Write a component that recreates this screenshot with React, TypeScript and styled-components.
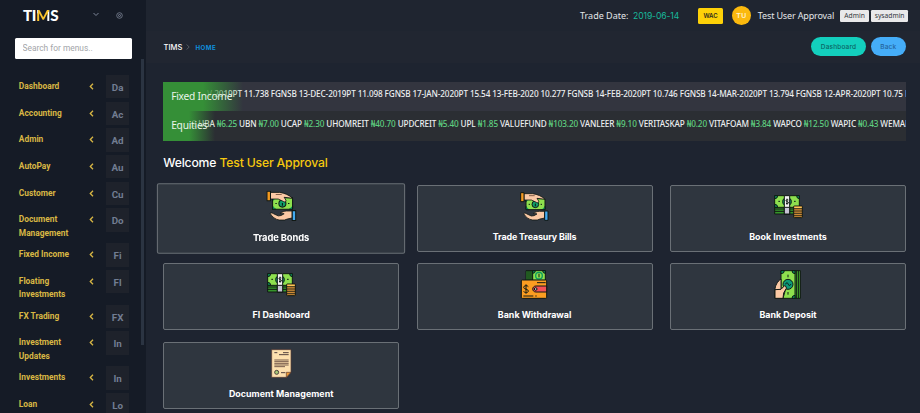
import React from "react";
import styled, { createGlobalStyle, css } from "styled-components";

const GlobalStyle = createGlobalStyle`
  * { box-sizing: border-box; }
  body { margin: 0; background: #1e2430; overflow: hidden; }
`;

const Page = styled.div`
  display: flex;
  width: 920px;
  height: 413px;
  overflow: hidden;
  background: #1e2430;
  color: #fff;
  font-family: "Noto Sans", sans-serif;
  white-space: nowrap;
`;

/* ---------- Sidebar ---------- */
const Sidebar = styled.aside`
  flex: none;
  width: 146px;
  height: 413px;
  background: #151b26;
  display: flex;
  flex-direction: column;
`;
const Brand = styled.div`
  height: 38px;
  flex: none;
  display: flex;
  align-items: flex-start;
  padding: 6px 0 0 23px;
`;
const Logo = styled.div`
  width: 35px;
  font: 900 15.2px/18px Lato, sans-serif;
  letter-spacing: -0.35px;
`;
const LogoM = styled.span`
  background: linear-gradient(105deg, #fff 0 18%, #fbc52d 19% 74%, #fff 75%);
  background-clip: text;
  -webkit-background-clip: text;
  color: transparent;
`;
const BrandIcon = styled.svg<{ $left: number; $top: number }>`
  margin: ${(p) => p.$top}px 0 0 ${(p) => p.$left}px;
  fill: none;
  stroke: #7c8596;
`;
const Search = styled.input`
  flex: none;
  width: 116.5px;
  height: 20.5px;
  margin-left: 15px;
  padding: 0 7.5px;
  border: 0;
  border-radius: 1.5px;
  background: #fff;
  font: 8.4px Roboto, sans-serif;
  outline: 0;
  &::placeholder { color: #a3a5a9; opacity: 1; }
`;
const MenuArea = styled.div`
  flex: 1;
  display: flex;
  justify-content: space-between;
  min-height: 0;
`;
const Menu = styled.nav`
  padding: 16.6px 0 0 18.8px;
`;
const MenuRow = styled.div<{ $tall: boolean }>`
  display: flex;
  height: ${(p) => (p.$tall ? 35 : 26.62)}px;
`;
const MenuLabel = styled.span`
  width: 67px;
  padding-top: 5.1px;
  white-space: pre-line;
  color: #d8b744;
  font: 700 8.4px/13.6px Roboto, sans-serif;
`;
const Caret = styled.svg`
  width: 5px;
  height: 7px;
  margin: 8.1px 12.3px 0 2.8px;
  fill: none;
  stroke: #d8b744;
  stroke-width: 1.3;
`;
const Tile = styled.span`
  width: 23.4px;
  height: 23.4px;
  background: #1e222b;
  color: #727d92;
  font: 700 9.8px/25px Roboto, sans-serif;
  text-align: center;
`;
const Scrollbar = styled.div`
  width: 3.6px;
  height: 286px;
  margin: 0.5px 1.6px 0 0;
  background: #2b3442;
`;

/* ---------- Main ---------- */
const Main = styled.main`
  flex: 1;
  min-width: 0;
`;
const TopBar = styled.header`
  height: 31px;
  display: flex;
  align-items: center;
  justify-content: flex-end;
  padding-right: 12px;
  background: #1f2530;
`;
const Txt = styled.span<{ $w: number; $size: number; $ls?: number; $color?: string; $font?: string; $gap?: number }>`
  width: ${(p) => p.$w}px;
  margin-right: ${(p) => p.$gap ?? 0}px;
  font-family: ${(p) => p.$font ?? '"Noto Sans"'}, sans-serif;
  font-size: ${(p) => p.$size}px;
  letter-spacing: ${(p) => p.$ls ?? 0}px;
  color: ${(p) => p.$color ?? "#e3e5e8"};
`;
const WacBadge = styled.span`
  width: 25px;
  height: 15.5px;
  margin: 1px 9px 0 0;
  border-radius: 1.5px;
  background: #fdd108;
  color: #2c2a1c;
  font: 600 6px/15.5px Inter, sans-serif;
  text-align: center;
`;
const Avatar = styled.span`
  width: 18.8px;
  height: 18.8px;
  margin-right: 7px;
  border-radius: 50%;
  background: #fbb90e;
  color: #fff3cf;
  font: 500 7.6px/19px Roboto, sans-serif;
  letter-spacing: 0.3px;
  text-align: center;
`;
const RoleTag = styled.span<{ $w: number }>`
  width: ${(p) => p.$w}px;
  height: 12.4px;
  margin: 1px 0 0 2.4px;
  border-radius: 1.2px;
  background: #e9e9ea;
  color: #34383f;
  font: 6.7px/12.6px "Noto Sans", sans-serif;
  text-align: center;
`;
const CrumbBar = styled.div`
  height: 32px;
  display: flex;
  align-items: center;
  justify-content: space-between;
  padding: 0 14px 0 17.5px;
  background: #212631;
`;
const Crumbs = styled.div`
  display: flex;
  align-items: center;
  font: 500 7.6px Inter, sans-serif;
`;
const CrumbSep = styled.svg`
  width: 4px;
  height: 6px;
  margin: 0 5px 0 4px;
  fill: none;
  stroke: #565b62;
`;
const CrumbHere = styled.span`
  color: #0f8fdd;
  font-size: 6.2px;
  font-weight: 700;
  letter-spacing: 0.5px;
`;
const Actions = styled.div`
  display: flex;
  gap: 4.5px;
  margin-top: -1px;
`;
const Pill = styled.button<{ $w: number; $bg: string; $fg: string }>`
  width: ${(p) => p.$w}px;
  height: 19px;
  padding: 0;
  border: 0;
  border-radius: 10px;
  background: ${(p) => p.$bg};
  color: ${(p) => p.$fg};
  font: 500 6.5px Inter, sans-serif;
  letter-spacing: 0.16px;
`;
const Content = styled.div`
  padding: 18.7px 14px 0 17.2px;
`;

/* ---------- Tickers ---------- */
const Ticker = styled.div<{ $bg: string }>`
  position: relative;
  height: 29.5px;
  overflow: hidden;
  background: ${(p) => p.$bg};
`;
const Tape = styled.div<{ $x: number; $ls: number; $top: number }>`
  padding: ${(p) => p.$top}px 0 0 ${(p) => p.$x}px;
  color: #eceef0;
  font: 500 8.2px/14px "Noto Sans", sans-serif;
  letter-spacing: ${(p) => p.$ls}px;
`;
const Price = styled.span`
  color: #5fcf80;
`;
const TickerName = styled.div<{ $w: number; $solid: number }>`
  position: absolute;
  inset: 0 auto 0 0;
  width: ${(p) => p.$w}px;
  padding-left: 8px;
  background: linear-gradient(90deg, #358f37 ${(p) => p.$solid}%, rgba(53, 143, 55, 0));
  color: #e9f4ea;
  font: 10.2px/29.5px "Noto Sans", sans-serif;
  letter-spacing: -0.24px;
`;

const Welcome = styled.h1`
  margin: 13.3px 0 14px;
  font: 500 12.2px/17px Inter, sans-serif;
  height: 17px;
  letter-spacing: -0.16px;
`;
const Gold = styled.span`
  color: #f6c90e;
`;

/* ---------- Cards ---------- */
const Grid = styled.div`
  display: grid;
  grid-template-columns: repeat(3, 236px);
  justify-content: space-between;
  grid-auto-rows: 67px;
  row-gap: 11.3px;
`;
const Card = styled.a<{ $active?: boolean }>`
  display: flex;
  flex-direction: column;
  align-items: center;
  border: 1px solid #6a7076;
  border-radius: 2px;
  background: #2f363f;
  padding-top: 6px;
  ${(p) => p.$active && css`transform: scale(1.052);`}
`;
const Art = styled.svg`
  width: 29px;
  height: 29px;
  stroke: #101814;
  stroke-width: 3;
  stroke-linejoin: round;
`;
const CardTitle = styled.span<{ $ls: number }>`
  margin-top: 9px;
  font: 700 8.9px/14px Inter, sans-serif;
  letter-spacing: ${(p) => p.$ls}px;
`;

const HandsArt = () => (
  <Art viewBox="0 0 87 87">
    <rect x="18" y="20" width="57" height="33" rx="2" fill="#8ee04e" />
    <path d="M18 30V20h10M75 43v10H65M18 43v10h10" fill="#0a9a5c" />
    <circle cx="46" cy="37" r="10" fill="#0f9d68" />
    <path d="M46 35v8M26 37h4M62 37h4" fill="none" />
    <path
      d="M12 5h26c14 2 27 7 37 17l-24-3 5 8c2 4-3 7-7 4l-15-7H12z"
      fill="#fbc9a5"
      strokeWidth="2.4"
    />
    <path d="M27 11h17" fill="none" stroke="#85614b" />
    <rect x="2" y="2" width="10" height="27" fill="#f59a20" />
    <path
      d="M11 65c3-3 7-1 10 1l13 6 8-1 9-5c-3-2-7-2-11-1 4-5 12-7 18-7h16v20l-14 3-8 3H38c-12-1-22-10-27-19z"
      fill="#fbc9a5"
      strokeWidth="2.4"
    />
    <rect x="74" y="57" width="10" height="28" fill="#43aaf0" />
  </Art>
);
const StackArt = () => (
  <Art viewBox="0 0 87 87">
    <path d="M2 43h72v23H2z" fill="#36962b" />
    <path d="M2 51h72M2 58h72" />
    <rect x="2" y="11" width="74" height="35" fill="#8ee04e" />
    <path d="M2 11h9q0 9-9 9zM76 11v9q-8 0-8-9zM2 46v-9q9 0 9 9z" fill="#0b9a60" />
    <circle cx="39" cy="29" r="13" fill="#0b9a60" />
    <path d="M31 11h16v55H31z" fill="#f4f2f4" />
    <path d="M31 46h16v20H31z" fill="#c7c3d6" />
    <path d="M39 20v18M43 24c-8-3-9 4-3 5s4 8-4 5M13 28h5M60 28h5" fill="none" />
    <rect x="59" y="42" width="26" height="35" rx="2" fill="#cf8b36" />
    <path d="M61 44h22v5H61z" fill="#ffc75a" stroke="none" />
    <path d="M60 50h24M60 57h24M60 64h24M60 71h24" strokeWidth="2.4" />
  </Art>
);
const WalletArt = () => (
  <Art viewBox="0 0 87 87">
    <path d="M18 2h22v29H18z" fill="#329b2c" />
    <path d="M24 2v29M30 2v29M36 2v29" />
    <path d="M38 2h38v29H38z" fill="#8ee04e" />
    <path d="M38 2h8q0 8-8 8zM76 2v8q-8 0-8-8z" fill="#0b9a60" />
    <circle cx="57" cy="17" r="10" fill="#8ee04e" stroke="#0b9a60" strokeWidth="4" />
    <path d="M57 11v11" />
    <rect x="4" y="30" width="76" height="55" rx="3" fill="#fb9d21" />
    <path d="M51 38h26M10 78h30M46 78h4" />
    <path d="M80 48v18H48c-13 0-13-18 0-18z" fill="#f45156" />
    <circle cx="47" cy="57" r="4" fill="#b2cfc9" />
    <path d="M18 43v28M25 50c-3-5-14-4-14 2 0 7 14 4 14 11 0 6-11 7-14 1" fill="none" />
  </Art>
);
const CashArt = () => (
  <Art viewBox="0 0 87 87">
    <path d="M61 2h18v83H61z" fill="#44a92c" />
    <path d="M67 2v83M73 2v83" />
    <path d="M21 2h42v83H21z" fill="#8ee04e" />
    <path d="M21 2h10q0 9-10 9zM63 2v9q-9 0-9-9zM63 85v-9q-9 0-9 9z" fill="#0b9a60" />
    <path d="M21 27C10 34 3 48 3 59v26h24l8-28-7-5-7 6z" fill="#fbc9a5" />
    <circle cx="42" cy="43" r="15" fill="#0b9a78" />
    <path d="M35 43c0-7 8-4 8 0s7 5 7-1M42 14v8M42 66v8" fill="none" />
    <path d="M3 59v26h24l2-16 8-14q1-6-5-8l-11 11z" fill="#fbc9a5" />
  </Art>
);
const DocArt = () => (
  <Art viewBox="0 0 87 87">
    <path d="M14 2h58v67L59 85H14z" fill="#fde0ae" stroke="#5b3b32" strokeWidth="2" />
    <path d="M22 11h9M48 11h17M36 17h29" stroke="#55433f" fill="none" />
    <path d="M22 33h43M22 38h43M22 43h43M22 48h43M22 53h32" stroke="#775c4c" fill="none" />
    <circle cx="29" cy="70" r="6" fill="#a8c878" stroke="#4b413d" />
    <path d="M42 71h13" stroke="#55433f" />
    <path d="M58 85V70h14z" fill="#f19b35" stroke="#5b3b32" strokeWidth="2" />
  </Art>
);

const menu: [string, string][] = [
  ["Dashboard", "Da"],
  ["Accounting", "Ac"],
  ["Admin", "Ad"],
  ["AutoPay", "Au"],
  ["Customer", "Cu"],
  ["Document\nManagement", "Do"],
  ["Fixed Income", "Fi"],
  ["Floating\nInvestments", "Fl"],
  ["FX Trading", "FX"],
  ["Investment\nUpdates", "In"],
  ["Investments", "In"],
  ["Loan", "Lo"],
];
const equities: [string, string][] = [
  ["UBA", "6.25"],
  ["UBN", "7.00"],
  ["UCAP", "2.30"],
  ["UHOMREIT", "40.70"],
  ["UPDCREIT", "5.40"],
  ["UPL", "1.85"],
  ["VALUEFUND", "103.20"],
  ["VANLEER", "9.10"],
  ["VERITASKAP", "0.20"],
  ["VITAFOAM", "3.84"],
  ["WAPCO", "12.50"],
  ["WAPIC", "0.43"],
  ["WEMABANK", "0.60"],
];
const cards: [string, React.FC, number][] = [
  ["Trade Bonds", HandsArt, -0.1],
  ["Trade Treasury Bills", HandsArt, -0.13],
  ["Book Investments", StackArt, 0],
  ["FI Dashboard", StackArt, 0],
  ["Bank Withdrawal", WalletArt, 0],
  ["Bank Deposit", CashArt, 0],
  ["Document Management", DocArt, 0.03],
];

export default function App() {
  return (
    <Page>
      <GlobalStyle />
      <Sidebar>
        <Brand>
          <Logo>TI<LogoM>M</LogoM>S</Logo>
          <BrandIcon $left={35} $top={6} width="6" height="5" viewBox="0 0 6 5">
            <path d="M.5 1 3 3.5 5.5 1" />
          </BrandIcon>
          <BrandIcon $left={17} $top={6.3} width="7" height="7" viewBox="0 0 7 7">
            <circle cx="3.5" cy="3.5" r="2.8" strokeWidth=".8" />
            <circle cx="3.5" cy="3.5" r="1" strokeWidth=".9" />
          </BrandIcon>
        </Brand>
        <Search placeholder="Search for menus.." />
        <MenuArea>
          <Menu>
            {menu.map(([label, abbr]) => (
              <MenuRow key={label} $tall={label.includes("\n")}>
                <MenuLabel>{label}</MenuLabel>
                <Caret viewBox="0 0 5 7"><path d="M4 .8 1.3 3.5 4 6.2" /></Caret>
                <Tile>{abbr}</Tile>
              </MenuRow>
            ))}
          </Menu>
          <Scrollbar />
        </MenuArea>
      </Sidebar>
      <Main>
        <TopBar>
          <Txt $w={48} $size={9} $gap={5}>Trade Date:</Txt>
          <Txt $w={46} $size={8.6} $gap={19} $ls={-0.1} $color="#18b99b" $font="Inter">2019-06-14</Txt>
          <WacBadge>WAC</WacBadge>
          <Avatar>TU</Avatar>
          <Txt $w={77} $size={9} $ls={-0.15} $gap={3}>Test User Approval</Txt>
          <RoleTag $w={28.6}>Admin</RoleTag>
          <RoleTag $w={36.8}>sysadmin</RoleTag>
        </TopBar>
        <CrumbBar>
          <Crumbs>
            TIMS
            <CrumbSep viewBox="0 0 4 6"><path d="M.7.5 3.2 3 .7 5.5" /></CrumbSep>
            <CrumbHere>HOME</CrumbHere>
          </Crumbs>
          <Actions>
            <Pill $w={55} $bg="#13cfbd" $fg="#0b6664">Dashboard</Pill>
            <Pill $w={35.5} $bg="#45adf8" $fg="#24649c">Back</Pill>
          </Actions>
        </CrumbBar>
        <Content>
          <Ticker $bg="#33353f">
            <Tape $x={43.7} $ls={-0.125} $top={5.5}>
              V-2019PT 11.738 FGNSB 13-DEC-2019PT 11.098 FGNSB 17-JAN-2020PT 15.54 13-FEB-2020 10.277 FGNSB
              14-FEB-2020PT 10.746 FGNSB 14-MAR-2020PT 13.794 FGNSB 12-APR-2020PT 10.75 FGNSB
            </Tape>
            <TickerName $w={80} $solid={50}>Fixed Income</TickerName>
          </Ticker>
          <Ticker $bg="#2b2e33">
            <Tape $x={28.5} $ls={-0.122} $top={5.5}>
              2{" "}
              {equities.map(([name, price]) => (
                <React.Fragment key={name}>{name} <Price>₦{price}</Price> </React.Fragment>
              ))}
            </Tape>
            <TickerName $w={52} $solid={50}>Equities</TickerName>
          </Ticker>
          <Welcome>Welcome <Gold>Test User Approval</Gold></Welcome>
          <Grid>
            {cards.map(([title, Icon, ls], i) => (
              <Card key={title} $active={i === 0}>
                <Icon />
                <CardTitle $ls={ls}>{title}</CardTitle>
              </Card>
            ))}
          </Grid>
        </Content>
      </Main>
    </Page>
  );
}
